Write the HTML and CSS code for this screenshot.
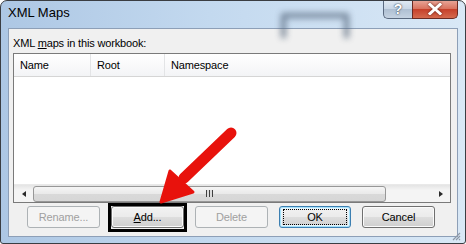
FILE: index.html
```html
<!doctype html>
<html lang="en">
  <head>
    <meta charset="utf-8">
    <title>XML Maps</title>
    <link rel="stylesheet" href="styles.css">
  </head>
  <body>
    <div class="window">
      <div class="ghost"></div>
      <div class="titlebar">
        <span class="title">XML Maps</span>
        <div class="caption-buttons">
          <div class="cap help">?</div>
          <div class="cap close">
            <svg width="16" height="12" viewBox="0 0 16 12">
              <path d="M3 1.5 L13 10.5 M13 1.5 L3 10.5" stroke="#fff" stroke-width="3" stroke-linecap="square"/>
            </svg>
          </div>
        </div>
      </div>
      <div class="client">
        <div class="label">XML <u>m</u>aps in this workbook:</div>
        <div class="listbox">
          <div class="list-header">
            <div class="col col-name">Name</div>
            <div class="col col-root">Root</div>
            <div class="col col-ns">Namespace</div>
          </div>
          <div class="list-body"></div>
          <div class="hscroll">
            <div class="arrow arrow-left"></div>
            <div class="thumb"><span class="grip"></span></div>
            <div class="arrow arrow-right"></div>
          </div>
        </div>
        <div class="buttons">
          <div class="btn disabled">Rename...</div>
          <div class="btn marked"><u>A</u>dd...</div>
          <div class="btn disabled">Delete</div>
          <div class="btn default"><span class="focus">OK</span></div>
          <div class="btn">Cancel</div>
        </div>
      </div>
      <div class="grip-corner">
        <svg width="10" height="10" viewBox="0 0 10 10">
          <path d="M9 2 L2 9 M9 5 L5 9 M9 8 L8 9" stroke="#8e98a6" stroke-width="1.2"/>
        </svg>
      </div>
      <svg class="pointer" width="466" height="244" viewBox="0 0 466 244">
        <path d="M231 133 L184 178" stroke="#e8120c" stroke-width="11" stroke-linecap="round"/>
        <path d="M161 202 L170 171 L193 192 Z" fill="#e8120c" stroke="#e8120c" stroke-width="3" stroke-linejoin="round"/>
      </svg>
    </div>
  </body>
</html>
```

FILE: styles.css
```css
html, body {
  margin: 0;
  padding: 0;
}
body {
  width: 466px;
  height: 244px;
  overflow: hidden;
  font-family: "Liberation Sans", Arial, sans-serif;
  font-size: 11px;
  letter-spacing: -0.15px;
  color: #000;
}
.window {
  position: relative;
  box-sizing: border-box;
  width: 466px;
  height: 244px;
  border: 1px solid #3a3d42;
  border-radius: 7px 7px 3px 3px;
  background: linear-gradient(90deg, #adc7e4 0%, #c3d9ef 45%, #d9e8f6 100%);
  display: flex;
  flex-direction: column;
  overflow: hidden;
}
.ghost {
  position: absolute;
  left: 280px;
  top: 12px;
  width: 58px;
  height: 20px;
  border: 5px solid #55677c;
  border-bottom: none;
  border-radius: 3px 3px 0 0;
  filter: blur(3px);
  opacity: 0.75;
}
.titlebar {
  position: relative;
  height: 27px;
  display: flex;
  padding: 0 7px 0 7px;
}
.title {
  font-size: 13px;
  letter-spacing: 0;
  line-height: 24px;
}
.caption-buttons {
  margin-left: auto;
  display: flex;
  align-self: flex-start;
  margin-top: -1px;
}
.cap {
  box-sizing: border-box;
  height: 19px;
  border: 1px solid #5a6a80;
  border-top: none;
  display: flex;
  align-items: center;
  justify-content: center;
}
.help {
  width: 29px;
  border-radius: 0 0 0 5px;
  border-right: none;
  background: linear-gradient(#e2ebf4 0%, #c8d6e5 50%, #aebfd2 51%, #c5d3e2 100%);
  color: #fff;
  font-weight: bold;
  font-size: 14px;
  text-shadow: 0 0 2px #3d4b5c, 0 0 1px #3d4b5c;
}
.close {
  width: 46px;
  border-radius: 0 0 5px 0;
  border-color: #6b2a22;
  background: linear-gradient(#e9a99c 0%, #d9735f 48%, #c6402a 52%, #d56a4e 100%);
}
.close svg {
  filter: drop-shadow(0 0 1px #5a1a10);
}
.client {
  flex: 1;
  margin: 0 7px 6px 7px;
  background: #f0f0f0;
  border: 1px solid #8d9fb7;
  padding: 7px 6px 0 4px;
  display: flex;
  flex-direction: column;
}
.label {
  line-height: 15px;
  height: 15px;
}
.listbox {
  margin-top: 2px;
  height: 150px;
  box-sizing: border-box;
  border: 1px solid #7a7a7a;
  background: #fff;
  display: flex;
  flex-direction: column;
}
.list-header {
  height: 22px;
  display: flex;
  background: linear-gradient(#ffffff, #f3f4f6);
  border-bottom: 1px solid #d5d5d5;
}
.col {
  box-sizing: border-box;
  padding-left: 6px;
  line-height: 22px;
  border-right: 1px solid #e3e4e6;
}
.col-name {
  width: 77px;
}
.col-root {
  width: 74px;
}
.col-ns {
  width: 100px;
  border-right: none;
}
.list-body {
  flex: 1;
}
.hscroll {
  height: 17px;
  display: flex;
  align-items: center;
  background: linear-gradient(#e4e4e4, #f4f4f4 30%, #f4f4f4);
  border-top: 1px solid #e9e9e9;
}
.arrow {
  width: 19px;
  height: 17px;
  display: flex;
  align-items: center;
  justify-content: center;
}
.arrow::before {
  content: "";
  border-top: 3.5px solid transparent;
  border-bottom: 3.5px solid transparent;
}
.arrow-left::before {
  border-right: 4px solid #2a2a2a;
}
.arrow-right {
  margin-left: auto;
}
.arrow-right::before {
  border-left: 4px solid #2a2a2a;
}
.thumb {
  box-sizing: border-box;
  width: 353px;
  height: 16px;
  border: 1px solid #979797;
  border-radius: 3px;
  background: linear-gradient(#f5f5f5 0%, #e9e9e9 50%, #d9d9d9 51%, #d6d6d6 100%);
  display: flex;
  align-items: center;
  justify-content: center;
}
.grip {
  width: 7px;
  height: 7px;
  background: repeating-linear-gradient(90deg, #404040 0 1px, #dcdcdc 1px 3px);
}
.buttons {
  display: flex;
  gap: 11px;
  margin-top: 3px;
  margin-left: 14px;
}
.btn {
  position: relative;
  box-sizing: border-box;
  width: 73px;
  height: 22px;
  border: 1px solid #707070;
  border-radius: 3px;
  background: linear-gradient(#f2f2f2 0%, #ebebeb 48%, #dddddd 52%, #cfcfcf 100%);
  box-shadow: inset 0 0 0 1px #fbfbfb;
  display: flex;
  align-items: center;
  justify-content: center;
  line-height: 14px;
}
.btn.disabled {
  border-color: #adb2b5;
  background: #f4f4f4;
  box-shadow: none;
  color: #a0a0a0;
}
.btn.marked::after {
  content: "";
  position: absolute;
  left: -4px;
  top: -4px;
  right: -4px;
  bottom: -5px;
  border: 3px solid #000;
}
.btn.default {
  width: 72px;
  border-color: #3c7fb1;
  box-shadow: inset 0 0 0 1px #a6e1fa, inset 0 0 0 2px #e6f5fd;
}
.focus {
  box-sizing: border-box;
  width: 64px;
  height: 16px;
  border: 1px dotted #000;
  display: flex;
  align-items: center;
  justify-content: center;
}
.grip-corner {
  position: absolute;
  right: 4px;
  bottom: 2px;
  width: 10px;
  height: 10px;
}
.pointer {
  position: absolute;
  left: -1px;
  top: -1px;
  pointer-events: none;
}
```
